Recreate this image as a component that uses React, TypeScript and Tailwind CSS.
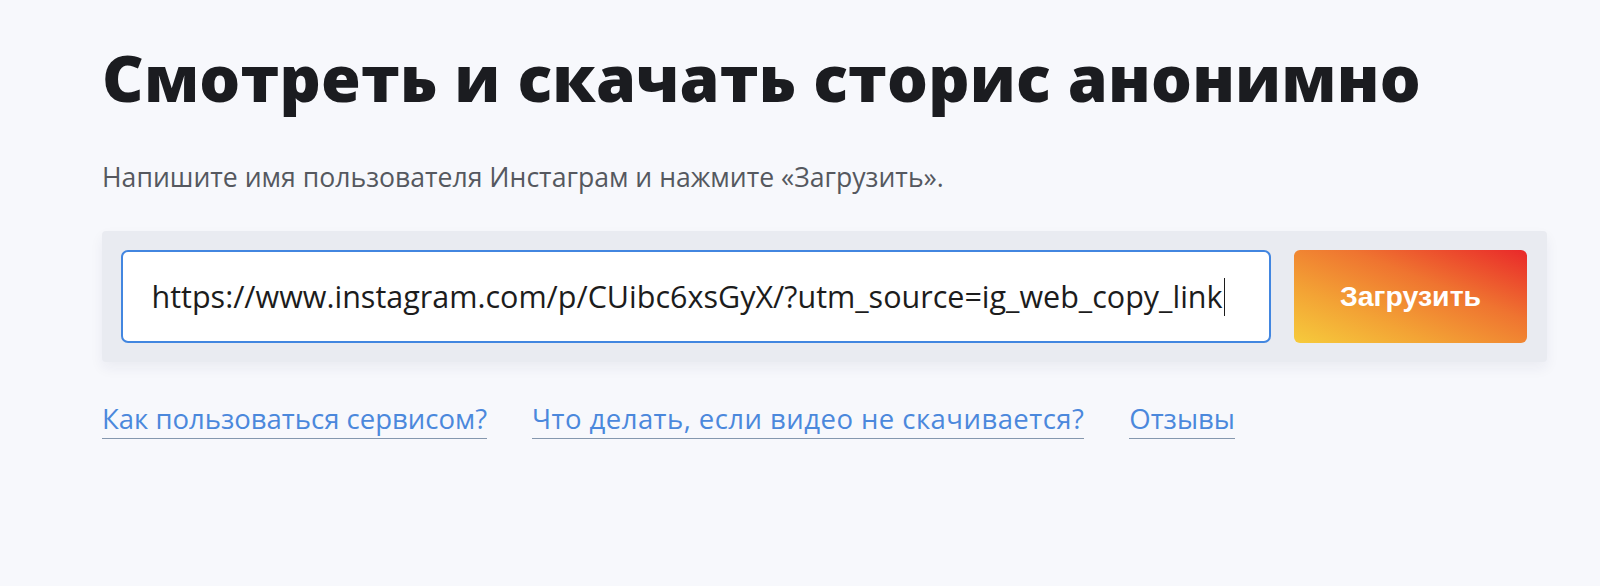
import React from 'react';

const links = ['Как пользоваться сервисом?', 'Что делать, если видео не скачивается?', 'Отзывы'];

const App: React.FC = () => {
    return (
        <div className="min-h-[586px] w-full bg-[#f7f8fc] font-['Open_Sans',sans-serif]">
            <div className="pl-[102px] pr-[53px] pt-[35px]">
                <h1 className="text-[64.3px] font-extrabold leading-[84px] tracking-[0.2px] text-[#1b1c20]">
                    Смотреть и скачать сторис анонимно
                </h1>

                <p className="mt-[40px] text-[26.6px] leading-[36px] text-[#55585f]">
                    Напишите имя пользователя Инстаграм и нажмите «Загрузить».
                </p>

                <div className="mt-[36px] flex gap-[23px] rounded-[4px] bg-[#e9ebf1] p-[19px] pr-[20px] shadow-[0_6px_14px_rgba(30,40,80,0.06)]">
                    <div className="flex h-[93px] flex-1 items-center rounded-[7px] border-2 border-[#4286e0] bg-white pl-[28.5px]">
                        <span className="text-[30.5px] text-[#1c1c1c]">
                            https://www.instagram.com/p/CUibc6xsGyX/?utm_source=ig_web_copy_link
                        </span>
                        <span className="ml-[1px] h-[38px] w-[1.5px] bg-[#1c1c1c]" />
                    </div>
                    <button className="h-[93px] w-[233px] rounded-[6px] bg-[linear-gradient(to_top_right,#f6cb3c_0%,#f3a335_30%,#ef7430_62%,#e9282a_100%)] font-['Liberation_Sans',Arial,sans-serif] text-[28.5px] font-bold text-white">
                        Загрузить
                    </button>
                </div>

                <div className="mt-[39px] flex gap-[45px]">
                    {links.map((l, i) => (
                        <a
                            key={l}
                            href="#"
                            className={
                                i === 1
                                    ? 'border-b-[1.5px] border-[#8597ae] pb-[1px] text-[27.5px] leading-[36px] tracking-[0.45px] text-[#4b88dc]'
                                    : 'border-b-[1.5px] border-[#8597ae] pb-[1px] text-[27.5px] leading-[36px] text-[#4b88dc]'
                            }
                        >
                            {l}
                        </a>
                    ))}
                </div>
            </div>
        </div>
    );
};

export default App;
